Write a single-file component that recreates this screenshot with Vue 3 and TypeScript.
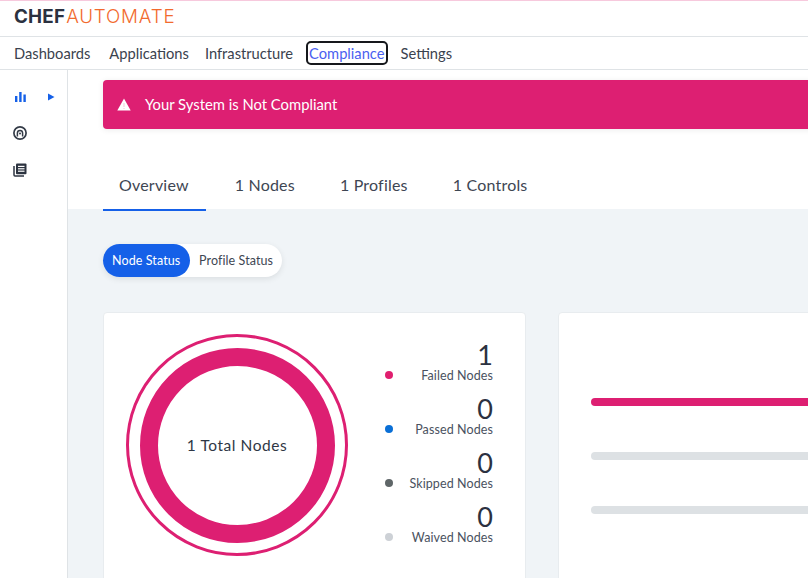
<script setup lang="ts">
interface Legend {
  count: number;
  label: string;
  color: string;
}

const navItems = ['Dashboards', 'Applications', 'Infrastructure', 'Compliance', 'Settings'];
const tabs = ['Overview', '1 Nodes', '1 Profiles', '1 Controls'];

const legend: Legend[] = [
  { count: 1, label: 'Failed Nodes', color: '#e01f6f' },
  { count: 0, label: 'Passed Nodes', color: '#0a6fd6' },
  { count: 0, label: 'Skipped Nodes', color: '#5f6668' },
  { count: 0, label: 'Waived Nodes', color: '#cdd1d6' }
];

const bars = ['#dd1f72', '#dde1e4', '#dde1e4'];
</script>

<template>
  <div class="page">
    <header class="brand">
      <span class="chef">CHEF</span><span class="automate">AUTOMATE</span>
    </header>

    <nav class="topnav">
      <a
        v-for="item in navItems"
        :key="item"
        class="nav-link"
        :class="{ focused: item === 'Compliance' }"
      >{{ item }}</a>
    </nav>

    <div class="body">
      <aside class="sidebar">
        <div class="side-row first">
          <svg class="side-icon" viewBox="0 0 12 12" width="12" height="12">
            <rect x="0" y="5" width="2.4" height="6" fill="#1560e8" />
            <rect x="4.2" y="1" width="2.4" height="10" fill="#1560e8" />
            <rect x="8.4" y="3.5" width="2.4" height="7.5" fill="#1560e8" />
          </svg>
          <svg class="arrow" viewBox="0 0 8 8" width="8" height="8">
            <path d="M1 0.5 L7.5 4 L1 7.5 Z" fill="#1560e8" />
          </svg>
        </div>
        <div class="side-row">
          <svg class="side-icon" viewBox="0 0 14 14" width="14" height="14" fill="none" stroke="#333b47">
            <circle cx="7" cy="7" r="6.1" stroke-width="1.7" />
            <path d="M4.4 10.6 V7 A2.6 2.6 0 0 1 9.6 7 V10.6" stroke-width="1.5" />
            <circle cx="7" cy="7.6" r="1" fill="#333b47" stroke="none" />
          </svg>
        </div>
        <div class="side-row">
          <svg class="side-icon" viewBox="0 0 14 14" width="14" height="14">
            <path d="M1 3 V12 A1 1 0 0 0 2 13 H11" fill="none" stroke="#2c3340" stroke-width="1.5" />
            <rect x="3" y="0.5" width="10.5" height="10.8" rx="1" fill="#2c3340" />
            <rect x="5" y="2.8" width="6.5" height="1.2" fill="#fff" />
            <rect x="5" y="5.2" width="6.5" height="1.2" fill="#fff" />
            <rect x="5" y="7.6" width="6.5" height="1.2" fill="#fff" />
          </svg>
        </div>
      </aside>

      <main class="main">
        <section class="top-panel">
          <div class="banner">
            <svg viewBox="0 0 14 13" width="14" height="13">
              <path d="M7 0.5 L13.7 12.5 H0.3 Z" fill="#fff" />
              <rect x="6.5" y="5" width="1" height="4" fill="#f3c3d8" />
              <rect x="6.5" y="10" width="1" height="1" fill="#f3c3d8" />
            </svg>
            <span class="banner-text">Your System is Not Compliant</span>
          </div>
          <div class="tabs">
            <a
              v-for="(tab, i) in tabs"
              :key="tab"
              class="tab"
              :class="{ active: i === 0 }"
            >{{ tab }}</a>
          </div>
        </section>

        <section class="content">
          <div class="switch">
            <span class="switch-opt on">Node Status</span>
            <span class="switch-opt">Profile Status</span>
          </div>

          <div class="cards">
            <div class="card status-card">
              <div class="donut">
                <div class="donut-inner">1 Total Nodes</div>
              </div>
              <ul class="legend">
                <li v-for="row in legend" :key="row.label" class="legend-row">
                  <span class="dot" :style="{ backgroundColor: row.color }" />
                  <div class="legend-text">
                    <div class="count">{{ row.count }}</div>
                    <div class="label">{{ row.label }}</div>
                  </div>
                </li>
              </ul>
            </div>

            <div class="card bars-card">
              <div
                v-for="(color, i) in bars"
                :key="i"
                class="bar"
                :style="{ backgroundColor: color }"
              />
            </div>
          </div>
        </section>
      </main>
    </div>
  </div>
</template>

<style scoped>
.page {
  width: 808px;
  height: 578px;
  overflow: hidden;
  background: #fff;
  font-family: "Lato", "Noto Sans", sans-serif;
  color: #333b47;
  border-top: 1px solid #f7c9dd;
  box-sizing: border-box;
  display: flex;
  flex-direction: column;
}

.brand {
  height: 36px;
  flex: none;
  box-sizing: border-box;
  padding: 6px 0 0 14px;
  font-family: "Inter", sans-serif;
  font-size: 18.8px;
  line-height: 20px;
  border-bottom: 1px solid #dfe3e6;
}

.chef {
  font-weight: 700;
  letter-spacing: 0.2px;
  color: #2b3140;
}

.automate {
  font-weight: 300;
  letter-spacing: 0.8px;
  color: #f26a2e;
  margin-left: 1px;
}

.topnav {
  height: 33px;
  flex: none;
  box-sizing: border-box;
  display: flex;
  align-items: center;
  gap: 14px;
  padding: 0 0 1px 13px;
  border-bottom: 1px solid #dfe3e6;
  font-size: 14.7px;
}

.nav-link {
  color: #3a424e;
  line-height: 20px;
  padding: 0 1px;
}

.nav-link:first-child {
  margin-right: 3px;
}

.nav-link.focused {
  color: #4a5ff0;
  outline: 2px solid #16181c;
  border-radius: 3px;
}

.body {
  flex: 1;
  display: flex;
  min-height: 0;
}

.sidebar {
  width: 68px;
  flex: none;
  box-sizing: border-box;
  border-right: 1px solid #dfe3e6;
  padding: 19px 0 0 13px;
  display: flex;
  flex-direction: column;
  gap: 21.5px;
}

.side-row {
  display: flex;
  align-items: center;
  height: 15px;
}

.side-row.first {
  gap: 20px;
  padding-left: 2px;
}

.side-icon,
.arrow {
  display: block;
}

.main {
  flex: 1;
  min-width: 0;
  display: flex;
  flex-direction: column;
}

.top-panel {
  flex: none;
  height: 139px;
  box-sizing: border-box;
  padding: 10px 0 0 35px;
  position: relative;
  z-index: 1;
}

.banner {
  height: 49px;
  width: 760px;
  display: flex;
  align-items: center;
  gap: 14px;
  padding-left: 14px;
  box-sizing: border-box;
  background: #dd1f72;
  border-radius: 4px 0 0 4px;
  color: #fff;
  font-size: 14.8px;
  box-shadow: 0 1px 6px rgba(0, 0, 0, 0.08);
}

.banner-text {
  margin-bottom: 2px;
}

.tabs {
  display: flex;
  margin-top: 32px;
}

.tab {
  height: 50px;
  box-sizing: border-box;
  padding: 14px 17px 0 17px;
  margin-right: 11px;
  font-size: 16px;
  line-height: 20px;
  letter-spacing: 0.2px;
  color: #3e4653;
}

.tab.active {
  padding-left: 16px;
  margin-right: 12px;
  border-bottom: 2px solid #1560e8;
}

.content {
  flex: 1;
  min-height: 0;
  background: #f0f4f7;
  box-sizing: border-box;
  padding: 35px 0 0 35px;
}

.switch {
  display: inline-flex;
  height: 33px;
  background: #fff;
  border-radius: 17px;
  align-items: center;
  box-shadow: 0 2px 6px rgba(0, 0, 0, 0.09);
  font-size: 12.5px;
  letter-spacing: 0.1px;
}

.switch-opt {
  height: 33px;
  line-height: 33px;
  padding: 0 9px 0 9px;
  color: #3e4653;
}

.switch-opt.on {
  width: 87px;
  box-sizing: border-box;
  padding: 0 0 0 9px;
  background: #1560e8;
  color: #fff;
  border-radius: 17px;
}

.cards {
  display: flex;
  gap: 32px;
  margin-top: 35px;
}

.card {
  height: 300px;
  background: #fff;
  border-radius: 4px;
  border: 1px solid #e8ecef;
  box-sizing: border-box;
  flex: none;
}

.status-card {
  width: 423px;
  display: flex;
}

.donut {
  width: 222px;
  height: 222px;
  margin: 21px 0 0 22px;
  flex: none;
  box-sizing: border-box;
  border-radius: 50%;
  border: 3px solid #dd1f72;
  display: flex;
  align-items: center;
  justify-content: center;
}

.donut-inner {
  width: 195px;
  height: 195px;
  box-sizing: border-box;
  border-radius: 50%;
  border: 18px solid #dd1f72;
  display: flex;
  align-items: center;
  justify-content: center;
  font-size: 15.5px;
  letter-spacing: 0.55px;
  color: #2f3745;
}

.legend {
  list-style: none;
  margin: 27px 0 0 37px;
  padding: 0;
  width: 108px;
}

.legend-row {
  height: 54px;
  display: flex;
  justify-content: space-between;
  position: relative;
}

.dot {
  width: 8px;
  height: 8px;
  border-radius: 50%;
  margin-top: 31px;
  flex: none;
}

.legend-text {
  text-align: right;
}

.count {
  font-size: 27px;
  line-height: 29px;
  font-weight: 400;
  color: #2b3140;
}

.label {
  font-size: 12.5px;
  line-height: 14px;
  letter-spacing: 0.1px;
  color: #4a5260;
}

.bars-card {
  width: 400px;
  padding: 85px 0 0 32px;
  display: flex;
  flex-direction: column;
  gap: 46px;
}

.bar {
  height: 8px;
  border-radius: 4px 0 0 4px;
}
</style>
